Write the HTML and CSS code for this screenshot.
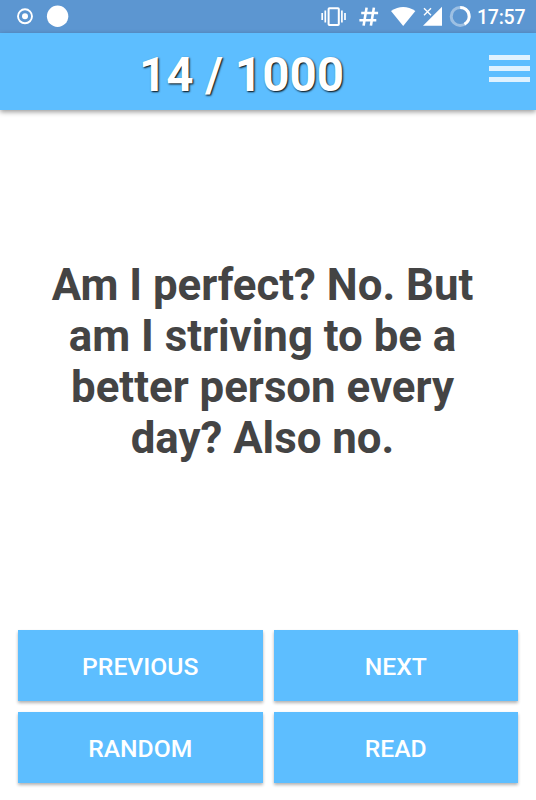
FILE: index.html
```html
<!DOCTYPE html>
<html lang="en">
<head>
    <meta charset="utf-8">
    <title>14 / 1000</title>
    <meta name="viewport" content="width=device-width, initial-scale=1">
    <link rel="stylesheet" href="styles.css">
</head>
<body>
    <div class="status-bar">
        <svg class="notifications" width="70" height="33" viewBox="0 0 70 33">
            <circle cx="25" cy="16.3" r="7" fill="none" stroke="#fff" stroke-width="1.9"/>
            <circle cx="25" cy="16.3" r="3" fill="#fff"/>
            <circle cx="57.6" cy="16.3" r="10.7" fill="#fff"/>
        </svg>
        <svg class="system-icons" width="160" height="33" viewBox="312 0 160 33">
            <!-- vibrate -->
            <rect x="328.6" y="8.2" width="10.2" height="16.8" rx="0.8" fill="none" stroke="#fff" stroke-width="2"/>
            <path d="M325.3 10.5v12M322.2 13v7M341.9 10.5v12M345 13v7" stroke="#fff" stroke-width="1.7"/>
            <!-- hash -->
            <path d="M366.6 7.6l-3 18M373.9 7.6l-3 18M361.2 13h16.9M359.4 20.2h16.9" fill="none" stroke="#fff" stroke-width="2.6"/>
            <!-- wifi -->
            <path d="M403.2 26L391 11.1q12.2-8 24.4 0z" fill="#fff"/>
            <!-- signal -->
            <path d="M442 6.8V25.8H423z" fill="#fff"/>
            <path d="M424 8.3l7 7M431 8.3l-7 7" stroke="#fff" stroke-width="1.4"/>
            <!-- battery -->
            <circle cx="460.2" cy="16.4" r="9" fill="none" stroke="#fff" stroke-opacity="0.4" stroke-width="3"/>
            <path d="M460.2 7.4a9 9 0 0 1 4.3 16.9" fill="none" stroke="#fff" stroke-width="3"/>
        </svg>
        <span class="clock">17:57</span>
    </div>
    <header class="header">
        <h1>14 / 1000</h1>
        <button class="menu" aria-label="Menu">
            <span></span>
            <span></span>
            <span></span>
        </button>
    </header>
    <main class="quote">
        <p>Am I perfect? No. But am I striving to be a better person every day? Also no.</p>
    </main>
    <nav class="controls">
        <button>PREVIOUS</button>
        <button>NEXT</button>
        <button>RANDOM</button>
        <button>READ</button>
    </nav>
</body>
</html>
```
FILE: styles.css
```css
* {
    margin: 0;
    padding: 0;
    box-sizing: border-box;
}

body {
    background: #fff;
    color: #444;
    font-family: Roboto, sans-serif;
    height: 100vh;
    display: flex;
    flex-direction: column;
    overflow: hidden;
}

.status-bar {
    background: #5c96d1;
    color: #fff;
    height: 33px;
    flex-shrink: 0;
    display: flex;
    align-items: center;
}

.system-icons {
    margin-left: auto;
}

.clock {
    width: 64px;
    padding: 1px 0 0 5px;
    font-size: 19.6px;
    font-weight: 500;
    letter-spacing: -0.3px;
    line-height: 33px;
}

.header {
    background: #5dbeff;
    height: 77px;
    flex-shrink: 0;
    display: flex;
    box-shadow: 0 2px 5px rgba(0, 0, 0, 0.4);
}

.header h1 {
    width: 483px;
    color: #fff;
    font-size: 47.6px;
    font-weight: 700;
    line-height: 84px;
    text-align: center;
    text-shadow: 1px 1px 2px #000;
}

.menu {
    width: 47px;
    height: 70px;
    padding-left: 6px;
    border: none;
    background: none;
    display: flex;
    flex-direction: column;
    justify-content: center;
    gap: 6px;
}

.menu span {
    width: 41px;
    height: 5px;
    background: #dff2ff;
}

.quote {
    flex: 1;
    display: flex;
    align-items: center;
    padding: 1px 51px 0 40px;
}

.quote p {
    width: 100%;
    font-size: 43.8px;
    font-weight: 700;
    line-height: 51px;
    text-align: center;
}

.controls {
    display: grid;
    grid-template-columns: 1fr 1fr;
    gap: 11px;
    padding: 17px 18px;
}

.controls button {
    height: 71px;
    padding-top: 2px;
    border: none;
    background: #5dbeff;
    color: #fff;
    font-family: inherit;
    font-size: 24.7px;
    font-weight: 500;
    box-shadow: 0 2px 3px rgba(0, 0, 0, 0.3);
}
```
